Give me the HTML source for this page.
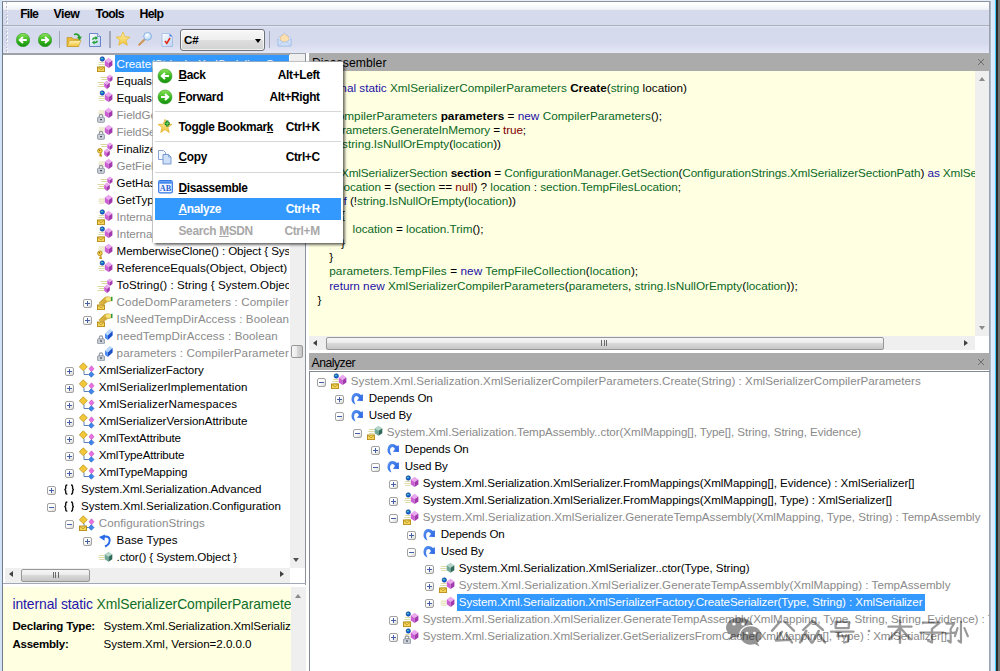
<!DOCTYPE html><html><head><meta charset="utf-8"><title>.NET Reflector</title><style>

html,body{margin:0;padding:0}
html{overflow:hidden;width:1000px;height:671px;background:#fff}
body{width:1000px;height:671px;overflow:hidden;position:relative;background:#fff;font-family:"Liberation Sans",sans-serif;color:#000}
.a,.t,.ic,.bx{position:absolute}
.t{white-space:pre;color:#000}
.bx{width:7px;height:7px;border:1px solid #a2a2a2;border-radius:2px;background:linear-gradient(135deg,#fff 0%,#fff 45%,#d8d6d0 100%)}
.bx .h{position:absolute;left:1px;top:3px;width:5px;height:1px;background:#4560a6}
.bx .v{position:absolute;left:3px;top:1px;width:1px;height:5px;background:#4560a6}
.hdr{background:#ababab}
.yel{background:#ffffe1}
.trk{background:#efefef}
.thumb{border:1px solid #979797;border-radius:2px;background:linear-gradient(#f6f6f6 0%,#ebebeb 45%,#d9d9d9 50%,#c6c6c6 100%);box-sizing:border-box}
.thumbv{border:1px solid #979797;border-radius:2px;background:linear-gradient(90deg,#f6f6f6 0%,#ebebeb 45%,#d9d9d9 50%,#c6c6c6 100%);box-sizing:border-box}
.sep{background:#a3a7ba;width:1.5px}
.msep{height:1px;background:#d7d7d7;left:2px;width:186px}

</style></head><body>
<svg width="0" height="0" style="position:absolute">
<defs>
<linearGradient id="gGreen" x1="0" y1="0" x2="0" y2="1"><stop offset="0" stop-color="#8fe45a"/><stop offset=".5" stop-color="#3cba22"/><stop offset="1" stop-color="#14900c"/></linearGradient>
<linearGradient id="gGold" x1="0" y1="0" x2="0" y2="1"><stop offset="0" stop-color="#fff4b0"/><stop offset="1" stop-color="#f0c23a"/></linearGradient>
<linearGradient id="gBlueP" x1="0" y1="0" x2="1" y2="1"><stop offset="0" stop-color="#ffffff"/><stop offset="1" stop-color="#bcd4f4"/></linearGradient>
<radialGradient id="gLens" cx=".4" cy=".35" r=".7"><stop offset="0" stop-color="#ffffff"/><stop offset="1" stop-color="#a9d3f6"/></radialGradient>

<!-- building blocks -->
<g id="cubeP"><polygon points="11.6,1.800 15.400,4.400 11.600,7 7.800,4.400" fill="#eaa8ee"/><polygon points="7.800,4.400 11.600,7 11.600,12 7.800,9.400" fill="#cc5ed4"/><polygon points="11.600,7 15.400,4.400 15.400,9.400 11.600,12" fill="#a23aae"/></g>
<g id="cubeT"><polygon points="11.5,2.8 15.3,5.2 11.5,7.7 7.7,5.2" fill="#b4d6c8"/><polygon points="7.7,5.2 11.5,7.7 11.5,12.8 7.7,10.2" fill="#6fa896"/><polygon points="11.5,7.7 15.3,5.2 15.3,10.2 11.5,12.8" fill="#2f6a5a"/></g>
<g id="lines"><path d="M2 6.5H7M3 8.5H7M2 10.5H7" stroke="#d6d290" stroke-width="1" fill="none"/></g>
<g id="linesS"><path d="M1.800 6.500H7.500M1.300 8.500H7.500M2.200 10.500H7.500" stroke="#dfdba6" stroke-width="1" fill="none"/></g>
<g id="globe"><circle cx="5.300" cy="3" r="2.200" fill="#1668e0" stroke="#0c2f7a" stroke-width=".6"/><path d="M4.100 2q1.300-.8 1.900.2q-.3 1.200-1.300 1.100q-.9-.3-.6-1.300z" fill="#52d8a0"/></g>
<g id="env"><rect x=".5" y="11" width="7" height="4.6" fill="#f3d55c" stroke="#b58a14" stroke-width=".9"/><path d="M.8 11.3L4 13.8L7.2 11.300" stroke="#b58a14" stroke-width=".7" fill="none"/></g>
<g id="lock"><path d="M2.3 11V9.600a1.700 1.700 0 0 1 3.400 0V11" stroke="#8e96a4" stroke-width="1.100" fill="none"/><rect x=".6" y="10.800" width="6.800" height="5" rx=".8" fill="#cdd2da" stroke="#7e8796" stroke-width=".8"/><path d="M2.800 12.600h2.400l-1.200 1.700z" fill="#2c3340"/></g>
<g id="key"><circle cx="2.900" cy="10.300" r="2.300" fill="#f6d64e" stroke="#a98212" stroke-width=".8"/><circle cx="2.500" cy="9.800" r=".7" fill="#7a5c08"/><path d="M3.600 12.300L4.300 15.500L2.900 15.200L3 13.800" stroke="#c99b1a" stroke-width="1.300" fill="none"/></g>

<!-- methods -->
<symbol id="m-plain" viewBox="0 0 16 16"><use href="#linesS" transform="translate(0,.6)"/><use href="#cubeP" transform="translate(0,.9)"/></symbol>
<symbol id="m-static" viewBox="0 0 16 16"><use href="#linesS"/><use href="#cubeP"/><use href="#globe"/></symbol>
<symbol id="m-static-int" viewBox="0 0 16 16"><use href="#linesS"/><use href="#cubeP"/><use href="#globe"/><use href="#env"/></symbol>
<symbol id="m-static-private" viewBox="0 0 16 16"><use href="#linesS"/><use href="#cubeP"/><use href="#globe"/><use href="#lock"/></symbol>
<symbol id="m-private" viewBox="0 0 16 16"><use href="#linesS" transform="translate(0,-2.500)"/><use href="#cubeP" transform="translate(0,-1)"/><use href="#lock" transform="translate(0,-.5)"/></symbol>
<symbol id="m-prot" viewBox="0 0 16 16"><use href="#linesS" transform="translate(0,-2.500)"/><use href="#cubeP" transform="translate(0,-1)"/><use href="#key"/></symbol>
<symbol id="m-virtual" viewBox="0 0 16 16"><path d="M3.500 4.500H10M4.500 6.500H10M.5 9.500H7M2 11.500H7M.5 13.500H7" stroke="#dcd89c" stroke-width="1" fill="none"/><g transform="translate(5,.1) scale(.68,.74)"><use href="#cubeP"/></g><g transform="translate(1.400,6.100) scale(.74,.82)"><use href="#cubeP"/></g></symbol>
<symbol id="m-virtual-prot" viewBox="0 0 16 16"><path d="M3.500 3.500H10M4.500 5.500H10" stroke="#dcd89c" stroke-width="1" fill="none"/><g transform="translate(5,.1) scale(.68,.74)"><use href="#cubeP"/></g><g transform="translate(1.400,6.100) scale(.74,.82)"><use href="#cubeP"/></g><use href="#key" transform="translate(0,-.5)"/></symbol>
<symbol id="ctor" viewBox="0 0 16 16"><use href="#linesS"/><use href="#cubeT"/></symbol>
<symbol id="ctor-int" viewBox="0 0 16 16"><use href="#linesS" transform="translate(0,-1)"/><use href="#cubeT" transform="translate(0,-1)"/><use href="#env"/></symbol>

<!-- field -->
<symbol id="f-private" viewBox="0 0 16 16"><polygon points="8,5.500 12.800,1 15.600,3 10.800,7.500" fill="#b6d7ff"/><polygon points="8,5.500 10.800,7.500 10.800,12 8,10" fill="#4b8af0"/><polygon points="10.800,7.500 15.600,3 15.600,7.500 10.800,12" fill="#1a50c8"/><use href="#lock"/></symbol>

<!-- property -->
<symbol id="p-int" viewBox="0 0 16 16"><path d="M2 8.800L8 3.200L11 2.700L13.800 3.400V7L10.500 7.700L6.500 10.400L3.200 10.400z" fill="#e3bd48" stroke="#b08c20" stroke-width=".5"/><path d="M3.500 8.500l3.800-3.800M5 9.300l3.800-3.800M6.500 9.600l3-3" stroke="#a88414" stroke-width=".55"/><ellipse cx="11.400" cy="5.100" rx="2.700" ry="2" fill="#f9e37c"/><rect x="14" y="2.800" width="1.500" height="4.300" fill="#2f9a3c"/><use href="#env"/></symbol>

<!-- class -->
<g id="clsbase"><path d="M5 8.500V12.500H9.500" stroke="#5b82b4" stroke-width="1" fill="none"/><polygon points="0.300,4.800 4.300,.8 8.300,4.800 4.300,8.800" fill="#f2c83a" stroke="#b48a10" stroke-width=".7"/><polygon points="10,6.800 12.500,3.800 15,6.800 12.500,9.800" fill="#ea70e2" stroke="#b040b0" stroke-width=".5"/><polygon points="9.500,12.500 12.300,9.700 15.100,12.500 12.300,15.300" fill="#3c86ea" stroke="#1c50b0" stroke-width=".5"/></g>
<symbol id="class" viewBox="0 0 16 16"><use href="#clsbase"/></symbol>
<symbol id="class-int" viewBox="0 0 16 16"><use href="#clsbase"/><use href="#env"/></symbol>

<!-- namespace -->
<symbol id="ns" viewBox="0 0 16 16"><path d="M6.300 4Q4.700 4 4.700 5.400V7.200Q4.700 8.400 3.400 8.600Q4.700 8.800 4.700 10V11.800Q4.700 13.200 6.300 13.200M10 4Q11.600 4 11.600 5.400V7.200Q11.600 8.400 12.900 8.600Q11.600 8.800 11.600 10V11.800Q11.600 13.200 10 13.200" stroke="#111" stroke-width="1.400" fill="none"/></symbol>

<!-- base types -->
<symbol id="basetypes" viewBox="0 0 16 16"><path d="M8 14.500Q13.500 12 12.500 7Q11.500 3.500 6.500 4.800" stroke="#2a6ae8" stroke-width="2" fill="none"/><polygon points="2,5 8,2.500 7.500,8.800" fill="#2a6ae8"/></symbol>

<!-- depends on / used by -->
<symbol id="dep" viewBox="0 0 16 16"><linearGradient id="gDep" x1="0" y1="0" x2="1" y2="1"><stop offset="0" stop-color="#5b95f2"/><stop offset="1" stop-color="#1f5be0"/></linearGradient><path d="M5.500 14.600Q1 12.400 1.500 8.200Q2.200 3 6.400 3Q9.300 3 10.900 5.100L12.900 4.300L12.900 10.900L6.900 10.700L9 8.100Q7.800 5.700 6.100 5.900Q3.900 6.500 4 9.400Q4.200 12.600 5.500 14.600Z" fill="url(#gDep)"/></symbol>

<!-- toolbar -->
<symbol id="tb-back" viewBox="0 0 14 14"><circle cx="7" cy="7" r="6.700" fill="url(#gGreen)" stroke="#1f8a14" stroke-width=".5"/><path d="M10.800 7H4.500M7 4L3.800 7L7 10" stroke="#fff" stroke-width="2" fill="none" stroke-linejoin="miter"/></symbol>
<symbol id="tb-fwd" viewBox="0 0 14 14"><circle cx="7" cy="7" r="6.700" fill="url(#gGreen)" stroke="#1f8a14" stroke-width=".5"/><path d="M3.200 7H9.500M7 4L10.200 7L7 10" stroke="#fff" stroke-width="2" fill="none" stroke-linejoin="miter"/></symbol>
<symbol id="mn-back" viewBox="0 0 16 16"><circle cx="8" cy="8" r="7" fill="url(#gGreen)" stroke="#1f8a14" stroke-width=".5"/><path d="M12 8H5.500M8 5L4.800 8L8 11" stroke="#fff" stroke-width="2" fill="none"/></symbol>
<symbol id="mn-fwd" viewBox="0 0 16 16"><circle cx="8" cy="8" r="7" fill="url(#gGreen)" stroke="#1f8a14" stroke-width=".5"/><path d="M4 8H10.500M8 5L11.200 8L8 11" stroke="#fff" stroke-width="2" fill="none"/></symbol>
<symbol id="tb-open" viewBox="0 0 16 16"><path d="M1 5.500H6L7 7H12.500V14.500H1z" fill="#e9b93a" stroke="#b8891a" stroke-width=".6"/><path d="M1 14.500L3.500 8.500H15L12.500 14.500z" fill="url(#gGold)" stroke="#c29a2a" stroke-width=".6"/><path d="M8 2.500Q12.500 1 13.500 5.500" stroke="#2aa02a" stroke-width="1.800" fill="none"/><polygon points="11,5 15.800,4.500 13.800,8.500" fill="#2aa02a"/></symbol>
<symbol id="tb-refresh" viewBox="0 0 16 16"><path d="M2.500 1.500H10.500L13.500 4.500V14.500H2.500z" fill="url(#gBlueP)" stroke="#5c7cc0" stroke-width=".9"/><path d="M10.500 1.500V4.500H13.500" fill="#dbe8fa" stroke="#5c7cc0" stroke-width=".7"/><path d="M5 7.500Q5.500 5 8.500 5.300L8.500 4L11 6L8.500 8V6.800Q6.500 6.500 6.300 8zM11 9Q10.500 11.700 7.500 11.300V12.600L5 10.600L7.500 8.600V9.800Q9.500 10 9.700 8.500z" fill="#1fa02c"/></symbol>
<symbol id="tb-star" viewBox="0 0 16 16"><polygon points="8,1 9.900,5.700 14.900,6.100 11.100,9.300 12.300,14.200 8,11.600 3.700,14.200 4.900,9.300 1.100,6.100 6.100,5.700" fill="url(#gGold)" stroke="#e8b424" stroke-width=".7"/></symbol>
<symbol id="tb-find" viewBox="0 0 16 16"><path d="M7.600 7.500L2.200 12.800" stroke="#cf9454" stroke-width="2" stroke-linecap="round"/><circle cx="10.600" cy="4.300" r="3.900" fill="url(#gLens)" stroke="#8ab2e0" stroke-width="1"/></symbol>
<symbol id="tb-check" viewBox="0 0 16 16"><path d="M3 1.500H10.500L13.500 4.500V14.500H3z" fill="url(#gBlueP)" stroke="#9db8e4" stroke-width=".8"/><path d="M10.500 1.500V4.500H13.500z" fill="#4a80e0"/><path d="M6 9L7.800 11.300L11 6" stroke="#e02818" stroke-width="1.600" fill="none"/></symbol>
<symbol id="tb-mail" viewBox="0 0 15 16"><path d="M1 6.500L7.500 1L14 6.500V14H1z" fill="#e6f0fc" stroke="#a4bfe8" stroke-width=".8"/><path d="M3.500 5L7.500 2L11.500 5V9.500H3.500z" fill="#fce0b0" stroke="#eeb066" stroke-width=".5"/><path d="M1 6.800L7.500 11L14 6.800V14H1z" fill="#cfe0f8" stroke="#a4bfe8" stroke-width=".7"/><path d="M1 14L5.800 9.800M14 14L9.200 9.800" stroke="#a4bfe8" stroke-width=".6"/></symbol>

<!-- menu -->
<symbol id="mn-star" viewBox="0 0 16 16"><polygon points="8.00,0.30 9.76,5.17 14.94,5.34 10.85,8.53 12.29,13.51 8.00,10.60 3.71,13.51 5.15,8.53 1.06,5.34 6.24,5.17" fill="url(#gGold)" stroke="#e2ac1c" stroke-width=".7"/><path d="M10.200 1.600V7.600M7.700 4.600H12.700" stroke="#157a15" stroke-width="2.600"/><path d="M10.200 2.400V6.800M8.500 4.600H11.900" stroke="#6fd868" stroke-width="1"/></symbol>
<symbol id="mn-copy" viewBox="0 0 16 16"><path d="M1.500 1.500H6.500L8.500 3.500V10.500H1.500z" fill="#f4f8ff" stroke="#7b98cc" stroke-width=".9"/><path d="M6 5.500H11.500L14 8V15H6z" fill="#cfe0fa" stroke="#6f90cc" stroke-width=".9"/><path d="M11.500 5.500V8H14" fill="none" stroke="#6f90cc" stroke-width=".7"/></symbol>
<symbol id="mn-dis" viewBox="0 0 16 16"><rect x="1.700" y=".700" width="13.600" height="12.200" rx="1.500" fill="#f4f8ff" stroke="#2d74e6" stroke-width="1.200"/><rect x="2.300" y="1.300" width="12.400" height="2.400" fill="#3f86f0"/><text x="8.500" y="10.900" font-family="Liberation Serif" font-weight="bold" font-size="8.200" text-anchor="middle" fill="#2a62d4">AB</text></symbol>
</defs>
</svg>

<div class="a" style="left:0;top:0;width:1000px;height:2px;background:#e3ebf6"></div>
<div class="a" style="left:0;top:0;width:2px;height:671px;background:#d2e3f8"></div>
<div class="a" style="left:2px;top:1px;width:1px;height:670px;background:#717c8b"></div>
<div class="a" style="left:2px;top:1px;width:988px;height:1px;background:#8a919c"></div>
<div class="a" style="left:989px;top:1px;width:2px;height:670px;background:linear-gradient(90deg,#8f97a3,#b9c2d0)"></div>
<div class="a" style="left:991px;top:0;width:4.500px;height:671px;background:linear-gradient(90deg,#e4eefb,#cfe3fa)"></div>
<div class="a" style="left:995.3px;top:0;width:1px;height:671px;background:#3cccff"></div>
<div class="a" style="left:996.3px;top:0;width:1.5px;height:671px;background:#2c2c2c"></div>
<div class="a" style="left:997.8px;top:0;width:2.2px;height:671px;background:#727272"></div>
<div class="a" style="left:3px;top:2px;width:986px;height:23px;background:linear-gradient(#ffffff 0%,#f5f6fb 26%,#eceef6 34%,#d6daed 36%,#d6daed 100%)"></div>
<div class="a" style="left:3px;top:25px;width:986px;height:1px;background:#adb1bd"></div>
<div class="a" style="left:3px;top:26px;width:986px;height:27px;background:linear-gradient(#e2e5f3 0px,#d6daed 2px,#d6daed 17px,#e4e7f5 27px)"></div>
<div class="a" style="left:3px;top:53px;width:302.5px;height:1.8px;background:#9da1a9"></div>
<div class="a" style="left:6.6px;top:3.2px;width:1.5px;height:1.5px;background:#fff;box-shadow:-1px -1px 0 #b9bdd0"></div>
<div class="a" style="left:6.6px;top:7px;width:1.5px;height:1.5px;background:#fff;box-shadow:-1px -1px 0 #b9bdd0"></div>
<div class="a" style="left:6.6px;top:10.8px;width:1.5px;height:1.5px;background:#fff;box-shadow:-1px -1px 0 #b9bdd0"></div>
<div class="a" style="left:6.6px;top:14.6px;width:1.5px;height:1.5px;background:#fff;box-shadow:-1px -1px 0 #b9bdd0"></div>
<div class="a" style="left:6.6px;top:18.4px;width:1.5px;height:1.5px;background:#fff;box-shadow:-1px -1px 0 #b9bdd0"></div>
<div class="a" style="left:6.6px;top:22.2px;width:1.5px;height:1.5px;background:#fff;box-shadow:-1px -1px 0 #b9bdd0"></div>
<div class="a" style="left:6.6px;top:28.6px;width:1.5px;height:1.5px;background:#fff;box-shadow:-1px -1px 0 #b9bdd0"></div>
<div class="a" style="left:6.6px;top:32.4px;width:1.5px;height:1.5px;background:#fff;box-shadow:-1px -1px 0 #b9bdd0"></div>
<div class="a" style="left:6.6px;top:36.2px;width:1.5px;height:1.5px;background:#fff;box-shadow:-1px -1px 0 #b9bdd0"></div>
<div class="a" style="left:6.6px;top:40px;width:1.5px;height:1.5px;background:#fff;box-shadow:-1px -1px 0 #b9bdd0"></div>
<div class="a" style="left:6.6px;top:43.8px;width:1.5px;height:1.5px;background:#fff;box-shadow:-1px -1px 0 #b9bdd0"></div>
<div class="a" style="left:6.6px;top:47.6px;width:1.5px;height:1.5px;background:#fff;box-shadow:-1px -1px 0 #b9bdd0"></div>
<div class="a" style="left:6.6px;top:51.2px;width:1.5px;height:1.5px;background:#fff;box-shadow:-1px -1px 0 #b9bdd0"></div>
<div class="t " style="left:20.2px;top:5.50px;font-size:12.3px;line-height:16px;height:16px;letter-spacing:-0.847px;"><span style="color:#000;font-weight:bold;">File</span></div>
<div class="t " style="left:53.4px;top:5.50px;font-size:12.3px;line-height:16px;height:16px;letter-spacing:-0.453px;"><span style="color:#000;font-weight:bold;">View</span></div>
<div class="t " style="left:95.5px;top:5.50px;font-size:12.3px;line-height:16px;height:16px;letter-spacing:-0.698px;"><span style="color:#000;font-weight:bold;">Tools</span></div>
<div class="t " style="left:139.6px;top:5.50px;font-size:12.3px;line-height:16px;height:16px;letter-spacing:-0.764px;"><span style="color:#000;font-weight:bold;">Help</span></div>
<svg class="ic" style="left:16px;top:33px" width="14" height="14" viewBox="0 0 14 14" ><use href="#tb-back"/></svg>
<svg class="ic" style="left:37.5px;top:33px" width="14" height="14" viewBox="0 0 14 14" ><use href="#tb-fwd"/></svg>
<div class="a sep" style="left:58.5px;top:31px;height:17px"></div>
<svg class="ic" style="left:66px;top:32px" width="16" height="16" viewBox="0 0 16 16" ><use href="#tb-open"/></svg>
<svg class="ic" style="left:87px;top:32px" width="16" height="16" viewBox="0 0 16 16" ><use href="#tb-refresh"/></svg>
<div class="a sep" style="left:109px;top:31px;height:17px"></div>
<svg class="ic" style="left:115.2px;top:30.6px" width="16" height="16" viewBox="0 0 16 16" ><use href="#tb-star"/></svg>
<svg class="ic" style="left:137px;top:32px" width="16" height="16" viewBox="0 0 16 16" ><use href="#tb-find"/></svg>
<svg class="ic" style="left:159px;top:32px" width="16" height="16" viewBox="0 0 16 16" ><use href="#tb-check"/></svg>
<div class="a" style="left:180px;top:29px;width:85px;height:22px;box-sizing:border-box;border:1px solid #6f7378;border-radius:3px;background:linear-gradient(#f7f7f7 0%,#efefef 48%,#dedede 52%,#d2d2d2 100%);box-shadow:inset 0 0 0 1px rgba(255,255,255,.7)"></div>
<div class="t " style="left:184px;top:32.20px;font-size:11.6px;line-height:16px;height:16px;letter-spacing:0.000px;"><span style="color:#000;font-weight:bold;">C#</span></div>
<div class="a" style="left:254.5px;top:38.5px;width:0;height:0;border-left:3.5px solid transparent;border-right:3.5px solid transparent;border-top:4px solid #000"></div>
<div class="a sep" style="left:268.7px;top:31px;height:17px"></div>
<svg class="ic" style="left:276.5px;top:32px" width="15" height="16" viewBox="0 0 15 16" ><use href="#tb-mail"/></svg>
<div class="a" style="left:304.8px;top:54px;width:1px;height:530.5px;background:#8b929d"></div>
<div class="a" style="left:3px;top:583.2px;width:302.8px;height:1.3px;background:#a3a9b4"></div>
<div class="a trk" style="left:290px;top:54px;width:15px;height:514px"></div>
<div class="a thumbv" style="left:290.5px;top:345px;width:12.5px;height:12.5px"></div>
<div class="a" style="left:293px;top:558px;width:0;height:0;border-left:3.5px solid transparent;border-right:3.5px solid transparent;border-top:4px solid #505050"></div>
<div class="a trk" style="left:4.5px;top:568px;width:285.5px;height:15px"></div>
<div class="a thumb" style="left:20.5px;top:568.5px;width:69px;height:13.5px"></div>
<div class="a" style="left:52.5px;top:572px;width:1px;height:6px;background:#6a6a6a"></div>
<div class="a" style="left:55px;top:572px;width:1px;height:6px;background:#6a6a6a"></div>
<div class="a" style="left:57.5px;top:572px;width:1px;height:6px;background:#6a6a6a"></div>
<div class="a" style="left:9px;top:571px;width:0;height:0;border-top:3.5px solid transparent;border-bottom:3.5px solid transparent;border-right:4px solid #404040"></div>
<div class="a" style="left:279.5px;top:571px;width:0;height:0;border-top:3.5px solid transparent;border-bottom:3.5px solid transparent;border-left:4px solid #404040"></div>
<div class="a" style="left:290px;top:568px;width:15px;height:15px;background:#fff"></div>
<div class="a" style="left:3px;top:54px;width:286px;height:514px;overflow:hidden">
<svg class="ic" style="left:94.0px;top:2.0px" width="16" height="16" viewBox="0 0 16 16" ><use href="#m-static-int"/></svg>
<div class="a" style="left:112.0px;top:0.9px;width:200px;height:17.6px;background:#3399ff"></div>
<div class="t " style="left:113.6px;top:1.80px;font-size:11.6px;line-height:16px;height:16px;letter-spacing:-0.060px;"><span style="color:#fff;">Create(String) : XmlSerializerCompilerParameters</span></div>
<svg class="ic" style="left:94.0px;top:19.0px" width="16" height="16" viewBox="0 0 16 16" ><use href="#m-virtual"/></svg>
<div class="t " style="left:113.6px;top:18.80px;font-size:11.6px;line-height:16px;height:16px;letter-spacing:-0.060px;"><span style="color:#000;">Equals(Object) : Boolean</span></div>
<svg class="ic" style="left:94.0px;top:36.0px" width="16" height="16" viewBox="0 0 16 16" ><use href="#m-static"/></svg>
<div class="t " style="left:113.6px;top:35.80px;font-size:11.6px;line-height:16px;height:16px;letter-spacing:-0.060px;"><span style="color:#000;">Equals(Object, Object) : Boolean</span></div>
<svg class="ic" style="left:94.0px;top:53.0px" width="16" height="16" viewBox="0 0 16 16" ><use href="#m-private"/></svg>
<div class="t " style="left:113.6px;top:52.80px;font-size:11.6px;line-height:16px;height:16px;letter-spacing:-0.060px;"><span style="color:#8a8a8a;">FieldGetter(String, String, Object&amp;) : Void</span></div>
<svg class="ic" style="left:94.0px;top:70.0px" width="16" height="16" viewBox="0 0 16 16" ><use href="#m-private"/></svg>
<div class="t " style="left:113.6px;top:69.80px;font-size:11.6px;line-height:16px;height:16px;letter-spacing:-0.060px;"><span style="color:#8a8a8a;">FieldSetter(String, String, Object) : Void</span></div>
<svg class="ic" style="left:94.0px;top:87.0px" width="16" height="16" viewBox="0 0 16 16" ><use href="#m-virtual-prot"/></svg>
<div class="t " style="left:113.6px;top:86.80px;font-size:11.6px;line-height:16px;height:16px;letter-spacing:-0.060px;"><span style="color:#000;">Finalize() : Void</span></div>
<svg class="ic" style="left:94.0px;top:104.0px" width="16" height="16" viewBox="0 0 16 16" ><use href="#m-private"/></svg>
<div class="t " style="left:113.6px;top:103.80px;font-size:11.6px;line-height:16px;height:16px;letter-spacing:-0.060px;"><span style="color:#8a8a8a;">GetFieldInfo(String, String) : FieldInfo</span></div>
<svg class="ic" style="left:94.0px;top:121.0px" width="16" height="16" viewBox="0 0 16 16" ><use href="#m-virtual"/></svg>
<div class="t " style="left:113.6px;top:120.80px;font-size:11.6px;line-height:16px;height:16px;letter-spacing:-0.060px;"><span style="color:#000;">GetHashCode() : Int32</span></div>
<svg class="ic" style="left:94.0px;top:138.0px" width="16" height="16" viewBox="0 0 16 16" ><use href="#m-plain"/></svg>
<div class="t " style="left:113.6px;top:137.80px;font-size:11.6px;line-height:16px;height:16px;letter-spacing:-0.060px;"><span style="color:#000;">GetType() : Type</span></div>
<svg class="ic" style="left:94.0px;top:155.0px" width="16" height="16" viewBox="0 0 16 16" ><use href="#m-static-int"/></svg>
<div class="t " style="left:113.6px;top:154.80px;font-size:11.6px;line-height:16px;height:16px;letter-spacing:-0.060px;"><span style="color:#8a8a8a;">InternalCreate(CompilerParameters) : Xml</span></div>
<svg class="ic" style="left:94.0px;top:172.0px" width="16" height="16" viewBox="0 0 16 16" ><use href="#m-static-int"/></svg>
<div class="t " style="left:113.6px;top:171.80px;font-size:11.6px;line-height:16px;height:16px;letter-spacing:-0.060px;"><span style="color:#8a8a8a;">InternalEquals(Object, Object) : Boolean</span></div>
<svg class="ic" style="left:94.0px;top:189.0px" width="16" height="16" viewBox="0 0 16 16" ><use href="#m-prot"/></svg>
<div class="t " style="left:113.6px;top:188.80px;font-size:11.6px;line-height:16px;height:16px;letter-spacing:-0.092px;"><span style="color:#000;">MemberwiseClone() : Object { System.Object }</span></div>
<svg class="ic" style="left:94.0px;top:206.0px" width="16" height="16" viewBox="0 0 16 16" ><use href="#m-static"/></svg>
<div class="t " style="left:113.6px;top:205.80px;font-size:11.6px;line-height:16px;height:16px;letter-spacing:0.015px;"><span style="color:#000;">ReferenceEquals(Object, Object) : Boolean</span></div>
<svg class="ic" style="left:94.0px;top:223.0px" width="16" height="16" viewBox="0 0 16 16" ><use href="#m-virtual"/></svg>
<div class="t " style="left:113.6px;top:222.80px;font-size:11.6px;line-height:16px;height:16px;letter-spacing:0.039px;"><span style="color:#000;">ToString() : String { System.Object }</span></div>
<div class="bx" style="left:79.8px;top:245.0px"><i class="h"></i><i class="v"></i></div>
<svg class="ic" style="left:94.0px;top:240.0px" width="16" height="16" viewBox="0 0 16 16" ><use href="#p-int"/></svg>
<div class="t " style="left:113.6px;top:239.80px;font-size:11.6px;line-height:16px;height:16px;letter-spacing:0.140px;"><span style="color:#8a8a8a;">CodeDomParameters : CompilerParameters</span></div>
<div class="bx" style="left:79.8px;top:262.0px"><i class="h"></i><i class="v"></i></div>
<svg class="ic" style="left:94.0px;top:257.0px" width="16" height="16" viewBox="0 0 16 16" ><use href="#p-int"/></svg>
<div class="t " style="left:113.6px;top:256.80px;font-size:11.6px;line-height:16px;height:16px;letter-spacing:0.107px;"><span style="color:#8a8a8a;">IsNeedTempDirAccess : Boolean</span></div>
<svg class="ic" style="left:94.0px;top:274.0px" width="16" height="16" viewBox="0 0 16 16" ><use href="#f-private"/></svg>
<div class="t " style="left:113.6px;top:273.80px;font-size:11.6px;line-height:16px;height:16px;letter-spacing:0.103px;"><span style="color:#8a8a8a;">needTempDirAccess : Boolean</span></div>
<svg class="ic" style="left:94.0px;top:291.0px" width="16" height="16" viewBox="0 0 16 16" ><use href="#f-private"/></svg>
<div class="t " style="left:113.6px;top:290.80px;font-size:11.6px;line-height:16px;height:16px;letter-spacing:0.116px;"><span style="color:#8a8a8a;">parameters : CompilerParameters</span></div>
<div class="bx" style="left:62.0px;top:313.0px"><i class="h"></i><i class="v"></i></div>
<svg class="ic" style="left:76.2px;top:308.0px" width="16" height="16" viewBox="0 0 16 16" ><use href="#class"/></svg>
<div class="t " style="left:95.8px;top:307.80px;font-size:11.6px;line-height:16px;height:16px;letter-spacing:-0.108px;"><span style="color:#000;">XmlSerializerFactory</span></div>
<div class="bx" style="left:62.0px;top:330.0px"><i class="h"></i><i class="v"></i></div>
<svg class="ic" style="left:76.2px;top:325.0px" width="16" height="16" viewBox="0 0 16 16" ><use href="#class"/></svg>
<div class="t " style="left:95.8px;top:324.80px;font-size:11.6px;line-height:16px;height:16px;letter-spacing:0.038px;"><span style="color:#000;">XmlSerializerImplementation</span></div>
<div class="bx" style="left:62.0px;top:347.0px"><i class="h"></i><i class="v"></i></div>
<svg class="ic" style="left:76.2px;top:342.0px" width="16" height="16" viewBox="0 0 16 16" ><use href="#class"/></svg>
<div class="t " style="left:95.8px;top:341.80px;font-size:11.6px;line-height:16px;height:16px;letter-spacing:0.102px;"><span style="color:#000;">XmlSerializerNamespaces</span></div>
<div class="bx" style="left:62.0px;top:364.0px"><i class="h"></i><i class="v"></i></div>
<svg class="ic" style="left:76.2px;top:359.0px" width="16" height="16" viewBox="0 0 16 16" ><use href="#class"/></svg>
<div class="t " style="left:95.8px;top:358.80px;font-size:11.6px;line-height:16px;height:16px;letter-spacing:-0.053px;"><span style="color:#000;">XmlSerializerVersionAttribute</span></div>
<div class="bx" style="left:62.0px;top:381.0px"><i class="h"></i><i class="v"></i></div>
<svg class="ic" style="left:76.2px;top:376.0px" width="16" height="16" viewBox="0 0 16 16" ><use href="#class"/></svg>
<div class="t " style="left:95.8px;top:375.80px;font-size:11.6px;line-height:16px;height:16px;letter-spacing:-0.150px;"><span style="color:#000;">XmlTextAttribute</span></div>
<div class="bx" style="left:62.0px;top:398.0px"><i class="h"></i><i class="v"></i></div>
<svg class="ic" style="left:76.2px;top:393.0px" width="16" height="16" viewBox="0 0 16 16" ><use href="#class"/></svg>
<div class="t " style="left:95.8px;top:392.80px;font-size:11.6px;line-height:16px;height:16px;letter-spacing:-0.180px;"><span style="color:#000;">XmlTypeAttribute</span></div>
<div class="bx" style="left:62.0px;top:415.0px"><i class="h"></i><i class="v"></i></div>
<svg class="ic" style="left:76.2px;top:410.0px" width="16" height="16" viewBox="0 0 16 16" ><use href="#class"/></svg>
<div class="t " style="left:95.8px;top:409.80px;font-size:11.6px;line-height:16px;height:16px;letter-spacing:-0.070px;"><span style="color:#000;">XmlTypeMapping</span></div>
<div class="bx" style="left:44.2px;top:432.0px"><i class="h"></i><i class="v"></i></div>
<svg class="ic" style="left:58.400000000000006px;top:427.0px" width="16" height="16" viewBox="0 0 16 16" ><use href="#ns"/></svg>
<div class="t " style="left:78.0px;top:426.80px;font-size:11.6px;line-height:16px;height:16px;letter-spacing:-0.076px;"><span style="color:#000;">System.Xml.Serialization.Advanced</span></div>
<div class="bx" style="left:44.2px;top:449.0px"><i class="h"></i></div>
<svg class="ic" style="left:58.400000000000006px;top:444.0px" width="16" height="16" viewBox="0 0 16 16" ><use href="#ns"/></svg>
<div class="t " style="left:78.0px;top:443.80px;font-size:11.6px;line-height:16px;height:16px;letter-spacing:-0.013px;"><span style="color:#000;">System.Xml.Serialization.Configuration</span></div>
<div class="bx" style="left:62.0px;top:466.0px"><i class="h"></i></div>
<svg class="ic" style="left:76.2px;top:461.0px" width="16" height="16" viewBox="0 0 16 16" ><use href="#class-int"/></svg>
<div class="t " style="left:95.8px;top:460.80px;font-size:11.6px;line-height:16px;height:16px;letter-spacing:0.053px;"><span style="color:#8a8a8a;">ConfigurationStrings</span></div>
<div class="bx" style="left:79.8px;top:483.0px"><i class="h"></i><i class="v"></i></div>
<svg class="ic" style="left:94.0px;top:478.0px" width="16" height="16" viewBox="0 0 16 16" ><use href="#basetypes"/></svg>
<div class="t " style="left:113.6px;top:477.80px;font-size:11.6px;line-height:16px;height:16px;letter-spacing:0.072px;"><span style="color:#000;">Base Types</span></div>
<svg class="ic" style="left:94.0px;top:495.0px" width="16" height="16" viewBox="0 0 16 16" ><use href="#ctor"/></svg>
<div class="t " style="left:113.6px;top:494.80px;font-size:11.6px;line-height:16px;height:16px;letter-spacing:-0.102px;"><span style="color:#000;">.ctor() { System.Object }</span></div>
</div>
<div class="a yel" style="left:3px;top:586.5px;width:288px;height:84.5px"></div>
<div class="a trk" style="left:291px;top:586.5px;width:14.5px;height:84.5px"></div>
<div class="a" style="left:295px;top:593.5px;width:0;height:0;border-left:3.5px solid transparent;border-right:3.5px solid transparent;border-bottom:4px solid #8a8a8a"></div>
<div class="a" style="left:3px;top:586.5px;width:288px;height:84.5px;overflow:hidden">
<div class="t " style="left:9.5px;top:8.50px;font-size:13.9px;line-height:18px;height:18px;letter-spacing:-0.100px;"><span style="color:#2414ac;">internal static </span><span style="color:#0f6e2a;">XmlSerializerCompilerParameters</span></div>
<div class="t " style="left:9.5px;top:31.80px;font-size:11.5px;line-height:16px;height:16px;letter-spacing:-0.195px;"><span style="color:#000;font-weight:bold;">Declaring Type:</span></div>
<div class="t " style="left:100.5px;top:31.80px;font-size:11.6px;line-height:16px;height:16px;letter-spacing:-0.060px;"><span style="color:#000;">System.Xml.Serialization.XmlSerializerCompilerParameters</span></div>
<div class="t " style="left:9.5px;top:49.50px;font-size:11.5px;line-height:16px;height:16px;letter-spacing:-0.241px;"><span style="color:#000;font-weight:bold;">Assembly:</span></div>
<div class="t " style="left:100.5px;top:49.50px;font-size:11.6px;line-height:16px;height:16px;letter-spacing:-0.044px;"><span style="color:#000;">System.Xml, Version=2.0.0.0</span></div>
</div>
<div class="a hdr" style="left:309px;top:53px;width:680.5px;height:17.6px"></div>
<div class="t " style="left:312px;top:54.60px;font-size:12.2px;line-height:16px;height:16px;letter-spacing:0.056px;"><span style="color:#000;">Disassembler</span></div>
<svg class="ic" style="left:977px;top:58px" width="8" height="8" viewBox="0 0 8 8"><path d="M1 1L7 7M7 1L1 7" stroke="#5a5a5a" stroke-width="0.75" fill="none"/></svg>
<div class="a yel" style="left:309px;top:71px;width:666px;height:265px"></div>
<div class="a trk" style="left:975px;top:71px;width:14px;height:265px"></div>
<div class="a" style="left:978.5px;top:77px;width:0;height:0;border-left:3.5px solid transparent;border-right:3.5px solid transparent;border-bottom:4px solid #8a8a8a"></div>
<div class="a" style="left:978.5px;top:326px;width:0;height:0;border-left:3.5px solid transparent;border-right:3.5px solid transparent;border-top:4px solid #8a8a8a"></div>
<div class="a trk" style="left:309px;top:336px;width:666px;height:13.5px"></div>
<div class="a thumb" style="left:325.5px;top:336.5px;width:558px;height:13px"></div>
<div class="a" style="left:601px;top:340px;width:1px;height:6px;background:#6a6a6a"></div>
<div class="a" style="left:603.5px;top:340px;width:1px;height:6px;background:#6a6a6a"></div>
<div class="a" style="left:606px;top:340px;width:1px;height:6px;background:#6a6a6a"></div>
<div class="a" style="left:313px;top:339.5px;width:0;height:0;border-top:3.5px solid transparent;border-bottom:3.5px solid transparent;border-right:4px solid #404040"></div>
<div class="a" style="left:963.5px;top:339.5px;width:0;height:0;border-top:3.5px solid transparent;border-bottom:3.5px solid transparent;border-left:4px solid #404040"></div>
<div class="a" style="left:309px;top:71px;width:666px;height:265px;overflow:hidden">
<div class="t " style="left:8.5px;top:9.80px;font-size:11.75px;line-height:14px;height:14px;letter-spacing:-0.002px;"><span style="color:#2010a6;">internal static </span><span style="color:#0b6826;">XmlSerializerCompilerParameters</span><span style="color:#000;"> </span><span style="color:#000;font-weight:bold;">Create</span><span style="color:#000;">(</span><span style="color:#0b6826;">string</span><span style="color:#000;"> location)</span></div>
<div class="t " style="left:8.5px;top:23.93px;font-size:11.75px;line-height:14px;height:14px;letter-spacing:-0.120px;"><span style="color:#000;">{</span></div>
<div class="t " style="left:20.19999999999999px;top:38.06px;font-size:11.75px;line-height:14px;height:14px;letter-spacing:0.024px;"><span style="color:#0b6826;">CompilerParameters</span><span style="color:#000;"> </span><span style="color:#000;font-weight:bold;">parameters</span><span style="color:#000;"> = </span><span style="color:#2010a6;">new</span><span style="color:#000;"> </span><span style="color:#0b6826;">CompilerParameters</span><span style="color:#000;">();</span></div>
<div class="t " style="left:20.19999999999999px;top:52.19px;font-size:11.75px;line-height:14px;height:14px;letter-spacing:-0.116px;"><span style="color:#0b6826;">parameters.GenerateInMemory</span><span style="color:#000;"> = </span><span style="color:#800000;">true</span><span style="color:#000;">;</span></div>
<div class="t " style="left:20.19999999999999px;top:66.32px;font-size:11.75px;line-height:14px;height:14px;letter-spacing:-0.036px;"><span style="color:#2010a6;">if</span><span style="color:#000;"> (</span><span style="color:#0b6826;">string.IsNullOrEmpty</span><span style="color:#000;">(</span><span style="color:#0b6826;">location</span><span style="color:#000;">))</span></div>
<div class="t " style="left:20.19999999999999px;top:80.45px;font-size:11.75px;line-height:14px;height:14px;letter-spacing:-0.120px;"><span style="color:#000;">{</span></div>
<div class="t " style="left:31.899999999999977px;top:94.58px;font-size:11.75px;line-height:14px;height:14px;letter-spacing:-0.092px;"><span style="color:#0b6826;">XmlSerializerSection</span><span style="color:#000;"> </span><span style="color:#000;font-weight:bold;">section</span><span style="color:#000;"> = </span><span style="color:#0b6826;">ConfigurationManager.GetSection</span><span style="color:#000;">(</span><span style="color:#0b6826;">ConfigurationStrings.XmlSerializerSectionPath</span><span style="color:#000;">) </span><span style="color:#2010a6;">as</span><span style="color:#000;"> </span><span style="color:#0b6826;">XmlSerializerSection</span><span style="color:#000;">;</span></div>
<div class="t " style="left:31.899999999999977px;top:108.71px;font-size:11.75px;line-height:14px;height:14px;letter-spacing:-0.037px;"><span style="color:#0b6826;">location</span><span style="color:#000;"> = (</span><span style="color:#0b6826;">section</span><span style="color:#000;"> == </span><span style="color:#800000;">null</span><span style="color:#000;">) ? </span><span style="color:#0b6826;">location</span><span style="color:#000;"> : </span><span style="color:#0b6826;">section.TempFilesLocation</span><span style="color:#000;">;</span></div>
<div class="t " style="left:31.899999999999977px;top:122.84px;font-size:11.75px;line-height:14px;height:14px;letter-spacing:-0.034px;"><span style="color:#2010a6;">if</span><span style="color:#000;"> (!</span><span style="color:#0b6826;">string.IsNullOrEmpty</span><span style="color:#000;">(</span><span style="color:#0b6826;">location</span><span style="color:#000;">))</span></div>
<div class="t " style="left:31.899999999999977px;top:136.97px;font-size:11.75px;line-height:14px;height:14px;letter-spacing:-0.120px;"><span style="color:#000;">{</span></div>
<div class="t " style="left:43.60000000000002px;top:151.10px;font-size:11.75px;line-height:14px;height:14px;letter-spacing:-0.038px;"><span style="color:#0b6826;">location</span><span style="color:#000;"> = </span><span style="color:#0b6826;">location.Trim</span><span style="color:#000;">();</span></div>
<div class="t " style="left:31.899999999999977px;top:165.23px;font-size:11.75px;line-height:14px;height:14px;letter-spacing:-0.120px;"><span style="color:#000;">}</span></div>
<div class="t " style="left:20.19999999999999px;top:179.36px;font-size:11.75px;line-height:14px;height:14px;letter-spacing:-0.120px;"><span style="color:#000;">}</span></div>
<div class="t " style="left:20.19999999999999px;top:193.49px;font-size:11.75px;line-height:14px;height:14px;letter-spacing:0.069px;"><span style="color:#0b6826;">parameters.TempFiles</span><span style="color:#000;"> = </span><span style="color:#2010a6;">new</span><span style="color:#000;"> </span><span style="color:#0b6826;">TempFileCollection</span><span style="color:#000;">(</span><span style="color:#0b6826;">location</span><span style="color:#000;">);</span></div>
<div class="t " style="left:20.19999999999999px;top:207.62px;font-size:11.75px;line-height:14px;height:14px;letter-spacing:-0.005px;"><span style="color:#2010a6;">return new</span><span style="color:#000;"> </span><span style="color:#0b6826;">XmlSerializerCompilerParameters</span><span style="color:#000;">(</span><span style="color:#0b6826;">parameters</span><span style="color:#000;">, </span><span style="color:#0b6826;">string.IsNullOrEmpty</span><span style="color:#000;">(</span><span style="color:#0b6826;">location</span><span style="color:#000;">));</span></div>
<div class="t " style="left:8.5px;top:221.75px;font-size:11.75px;line-height:14px;height:14px;letter-spacing:-0.120px;"><span style="color:#000;">}</span></div>
</div>
<div class="a hdr" style="left:309px;top:353.2px;width:680.5px;height:17px"></div>
<div class="t " style="left:311.5px;top:354.60px;font-size:12.2px;line-height:16px;height:16px;letter-spacing:-0.490px;"><span style="color:#000;">Analyzer</span></div>
<svg class="ic" style="left:977px;top:357.8px" width="8" height="8" viewBox="0 0 8 8"><path d="M1 1L7 7M7 1L1 7" stroke="#5a5a5a" stroke-width="0.75" fill="none"/></svg>
<div class="a" style="left:309px;top:370.7px;width:680.5px;height:1px;background:#828995"></div>
<div class="a" style="left:309px;top:370.7px;width:1px;height:300.3px;background:#828995"></div>
<div class="a" style="left:310px;top:371.5px;width:679px;height:299.5px;overflow:hidden">
<div class="bx" style="left:6.5px;top:6.5px"><i class="h"></i></div>
<svg class="ic" style="left:21.0px;top:1.5px" width="16" height="16" viewBox="0 0 16 16" ><use href="#m-static-int"/></svg>
<div class="t " style="left:40.8px;top:1.80px;font-size:11.6px;line-height:16px;height:16px;letter-spacing:0.035px;"><span style="color:#8a8a8a;">System.Xml.Serialization.XmlSerializerCompilerParameters.Create(String) : XmlSerializerCompilerParameters</span></div>
<div class="bx" style="left:24.5px;top:23.5px"><i class="h"></i><i class="v"></i></div>
<svg class="ic" style="left:40.0px;top:18.5px" width="16" height="16" viewBox="0 0 16 16" ><use href="#dep"/></svg>
<div class="t " style="left:58.8px;top:18.80px;font-size:11.6px;line-height:16px;height:16px;letter-spacing:-0.120px;"><span style="color:#000;">Depends On</span></div>
<div class="bx" style="left:24.5px;top:40.5px"><i class="h"></i></div>
<svg class="ic" style="left:40.0px;top:35.5px" width="16" height="16" viewBox="0 0 16 16" ><use href="#dep"/></svg>
<div class="t " style="left:58.8px;top:35.80px;font-size:11.6px;line-height:16px;height:16px;letter-spacing:-0.120px;"><span style="color:#000;">Used By</span></div>
<div class="bx" style="left:42.5px;top:57.5px"><i class="h"></i></div>
<svg class="ic" style="left:57.0px;top:52.5px" width="16" height="16" viewBox="0 0 16 16" ><use href="#ctor-int"/></svg>
<div class="t " style="left:76.8px;top:52.80px;font-size:11.6px;line-height:16px;height:16px;letter-spacing:-0.051px;"><span style="color:#8a8a8a;">System.Xml.Serialization.TempAssembly..ctor(XmlMapping[], Type[], String, String, Evidence)</span></div>
<div class="bx" style="left:60.5px;top:74.5px"><i class="h"></i><i class="v"></i></div>
<svg class="ic" style="left:76.0px;top:69.5px" width="16" height="16" viewBox="0 0 16 16" ><use href="#dep"/></svg>
<div class="t " style="left:94.8px;top:69.80px;font-size:11.6px;line-height:16px;height:16px;letter-spacing:-0.120px;"><span style="color:#000;">Depends On</span></div>
<div class="bx" style="left:60.5px;top:91.5px"><i class="h"></i></div>
<svg class="ic" style="left:76.0px;top:86.5px" width="16" height="16" viewBox="0 0 16 16" ><use href="#dep"/></svg>
<div class="t " style="left:94.8px;top:86.80px;font-size:11.6px;line-height:16px;height:16px;letter-spacing:-0.120px;"><span style="color:#000;">Used By</span></div>
<div class="bx" style="left:78.5px;top:108.5px"><i class="h"></i><i class="v"></i></div>
<svg class="ic" style="left:93.0px;top:103.5px" width="16" height="16" viewBox="0 0 16 16" ><use href="#m-static"/></svg>
<div class="t " style="left:112.8px;top:103.80px;font-size:11.6px;line-height:16px;height:16px;letter-spacing:-0.054px;"><span style="color:#000;">System.Xml.Serialization.XmlSerializer.FromMappings(XmlMapping[], Evidence) : XmlSerializer[]</span></div>
<div class="bx" style="left:78.5px;top:125.5px"><i class="h"></i><i class="v"></i></div>
<svg class="ic" style="left:93.0px;top:120.5px" width="16" height="16" viewBox="0 0 16 16" ><use href="#m-static"/></svg>
<div class="t " style="left:112.8px;top:120.80px;font-size:11.6px;line-height:16px;height:16px;letter-spacing:-0.054px;"><span style="color:#000;">System.Xml.Serialization.XmlSerializer.FromMappings(XmlMapping[], Type) : XmlSerializer[]</span></div>
<div class="bx" style="left:78.5px;top:142.5px"><i class="h"></i></div>
<svg class="ic" style="left:93.0px;top:137.5px" width="16" height="16" viewBox="0 0 16 16" ><use href="#m-static-int"/></svg>
<div class="t " style="left:112.8px;top:137.80px;font-size:11.6px;line-height:16px;height:16px;letter-spacing:0.001px;"><span style="color:#8a8a8a;">System.Xml.Serialization.XmlSerializer.GenerateTempAssembly(XmlMapping, Type, String) : TempAssembly</span></div>
<div class="bx" style="left:96.5px;top:159.5px"><i class="h"></i><i class="v"></i></div>
<svg class="ic" style="left:112.0px;top:154.5px" width="16" height="16" viewBox="0 0 16 16" ><use href="#dep"/></svg>
<div class="t " style="left:130.8px;top:154.80px;font-size:11.6px;line-height:16px;height:16px;letter-spacing:-0.120px;"><span style="color:#000;">Depends On</span></div>
<div class="bx" style="left:96.5px;top:176.5px"><i class="h"></i></div>
<svg class="ic" style="left:112.0px;top:171.5px" width="16" height="16" viewBox="0 0 16 16" ><use href="#dep"/></svg>
<div class="t " style="left:130.8px;top:171.80px;font-size:11.6px;line-height:16px;height:16px;letter-spacing:-0.120px;"><span style="color:#000;">Used By</span></div>
<div class="bx" style="left:114.5px;top:193.5px"><i class="h"></i><i class="v"></i></div>
<svg class="ic" style="left:129.0px;top:188.5px" width="16" height="16" viewBox="0 0 16 16" ><use href="#ctor"/></svg>
<div class="t " style="left:148.8px;top:188.80px;font-size:11.6px;line-height:16px;height:16px;letter-spacing:-0.065px;"><span style="color:#000;">System.Xml.Serialization.XmlSerializer..ctor(Type, String)</span></div>
<div class="bx" style="left:114.5px;top:210.5px"><i class="h"></i><i class="v"></i></div>
<svg class="ic" style="left:129.0px;top:205.5px" width="16" height="16" viewBox="0 0 16 16" ><use href="#m-static-int"/></svg>
<div class="t " style="left:148.8px;top:205.80px;font-size:11.6px;line-height:16px;height:16px;letter-spacing:0.026px;"><span style="color:#8a8a8a;">System.Xml.Serialization.XmlSerializer.GenerateTempAssembly(XmlMapping) : TempAssembly</span></div>
<div class="bx" style="left:114.5px;top:227.5px"><i class="h"></i><i class="v"></i></div>
<svg class="ic" style="left:129.0px;top:222.5px" width="16" height="16" viewBox="0 0 16 16" ><use href="#m-plain"/></svg>
<div class="a" style="left:146.8px;top:222.5px;width:468.2px;height:17px;background:#3399ff"></div>
<div class="t " style="left:148.8px;top:222.80px;font-size:11.6px;line-height:16px;height:16px;letter-spacing:-0.084px;"><span style="color:#fff;">System.Xml.Serialization.XmlSerializerFactory.CreateSerializer(Type, String) : XmlSerializer</span></div>
<div class="bx" style="left:78.5px;top:244.5px"><i class="h"></i><i class="v"></i></div>
<svg class="ic" style="left:93.0px;top:239.5px" width="16" height="16" viewBox="0 0 16 16" ><use href="#m-static-int"/></svg>
<div class="t " style="left:112.8px;top:239.80px;font-size:11.6px;line-height:16px;height:16px;letter-spacing:-0.046px;"><span style="color:#8a8a8a;">System.Xml.Serialization.XmlSerializer.GenerateTempAssembly(XmlMapping, Type, String, String, Evidence) : TempAssembly</span></div>
<div class="bx" style="left:78.5px;top:261.5px"><i class="h"></i><i class="v"></i></div>
<svg class="ic" style="left:93.0px;top:256.5px" width="16" height="16" viewBox="0 0 16 16" ><use href="#m-static-private"/></svg>
<div class="t " style="left:112.8px;top:256.80px;font-size:11.6px;line-height:16px;height:16px;letter-spacing:-0.058px;"><span style="color:#8a8a8a;">System.Xml.Serialization.XmlSerializer.GetSerializersFromCache(XmlMapping[], Type) : XmlSerializer[]</span></div>
</div>
<svg class="ic" style="left:724px;top:612px" width="250" height="38" viewBox="0 0 250 38">
<defs><mask id="wm"><rect width="60" height="40" fill="#fff"/><ellipse cx="26.800" cy="23.400" rx="11.800" ry="10.400" fill="#000"/></mask></defs>
<g fill="none" stroke="rgba(0,0,0,.40)" stroke-width="2.500" stroke-linecap="round" stroke-linejoin="round">
<g transform="translate(46,8) scale(1,.9)"><path d="M10 2L2 12M15 2L24 12M12 13L6 23L20 22M17 17L22 25"/></g>
<g transform="translate(75,8) scale(1.040,.9)"><path d="M13 1L4 11M13 1L23 11M7 12L1 25M7 16L12 25M19 12L13 25M19 16L25 25"/></g>
<g transform="translate(106,8) scale(.94,.9)"><path d="M6 2H20V9H6zM1 13H25M9 13L8 18H20L19 24L15 25"/></g>
<g transform="translate(163.500,7.500) scale(.96,.9)"><path d="M1 8H25M13 1V26M13 9L2 22M13 9L24 22"/></g>
<g transform="translate(195.500,8) scale(.96,.9)"><path d="M4 3H21L13 10V25L9 23M1 14H25"/></g>
<g transform="translate(221.500,8) scale(.86,.9)"><path d="M1 4H10L6 10V25L3 23M0 15L11 14M18 2V25L15 23M14 9L11 18M22 9L26 18"/></g>
</g>
<circle cx="145" cy="19" r="1.300" fill="rgba(0,0,0,.40)"/>
<g mask="url(#wm)"><path d="M14.800 5.600A14 9.800 0 1 1 10.500 24.700L4.500 28.500L7 22.800A14 9.800 0 0 1 14.800 5.600Z" fill="rgba(0,0,0,.42)"/>
<ellipse cx="10" cy="12" rx="1.700" ry="1.500" fill="#fff"/><ellipse cx="19" cy="12" rx="1.700" ry="1.500" fill="#fff"/></g>
<path d="M26.800 14.200A10.600 9.200 0 1 0 30.500 32L35.500 34.500L33.500 30.500A10.600 9.200 0 0 0 26.800 14.200Z" fill="rgba(0,0,0,.42)"/>
<ellipse cx="23" cy="21" rx="1.400" ry="1.300" fill="#fff"/><ellipse cx="30.500" cy="21" rx="1.400" ry="1.300" fill="#fff"/>
</svg>

<div class="a" style="left:153px;top:61.6px;width:190px;height:181.4px;background:#fff;box-shadow:-0.7px -0.7px 0 0 #b4b4b4, 2px 2px 2.5px rgba(0,0,0,.55), 0 0 2px rgba(0,0,0,.2)">
<svg class="ic" style="left:4px;top:6.199999999999996px" width="16" height="16" viewBox="0 0 16 16" ><use href="#mn-back"/></svg><div class="t" style="left:25.5px;top:5.899999999999995px;font-size:11.9px;line-height:16px;font-weight:bold;color:#000;letter-spacing:-0.33px"><u>B</u>ack</div><div class="t" style="right:23.3px;top:5.899999999999995px;font-size:11.9px;line-height:16px;font-weight:bold;color:#000;letter-spacing:-0.34px">Alt+Left</div>
<svg class="ic" style="left:4px;top:27.4px" width="16" height="16" viewBox="0 0 16 16" ><use href="#mn-fwd"/></svg><div class="t" style="left:25.5px;top:27.099999999999998px;font-size:11.9px;line-height:16px;font-weight:bold;color:#000;letter-spacing:-0.33px"><u>F</u>orward</div><div class="t" style="right:23.3px;top:27.099999999999998px;font-size:11.9px;line-height:16px;font-weight:bold;color:#000;letter-spacing:-0.34px">Alt+Right</div>
<div class="a msep" style="top:49.9px"></div>
<svg class="ic" style="left:4px;top:57.69999999999999px" width="16" height="16" viewBox="0 0 16 16" ><use href="#mn-star"/></svg><div class="t" style="left:25.5px;top:57.39999999999999px;font-size:11.9px;line-height:16px;font-weight:bold;color:#000;letter-spacing:-0.33px">Toggle Bookmar<u>k</u></div><div class="t" style="right:23.3px;top:57.39999999999999px;font-size:11.9px;line-height:16px;font-weight:bold;color:#000;letter-spacing:-0.34px">Ctrl+K</div>
<div class="a msep" style="top:79.9px"></div>
<svg class="ic" style="left:4px;top:87.70000000000002px" width="16" height="16" viewBox="0 0 16 16" ><use href="#mn-copy"/></svg><div class="t" style="left:25.5px;top:87.40000000000002px;font-size:11.9px;line-height:16px;font-weight:bold;color:#000;letter-spacing:-0.33px"><u>C</u>opy</div><div class="t" style="right:23.3px;top:87.40000000000002px;font-size:11.9px;line-height:16px;font-weight:bold;color:#000;letter-spacing:-0.34px">Ctrl+C</div>
<div class="a msep" style="top:110.4px"></div>
<svg class="ic" style="left:4px;top:118.4px" width="16" height="16" viewBox="0 0 16 16" ><use href="#mn-dis"/></svg><div class="t" style="left:25.5px;top:118.10000000000001px;font-size:11.9px;line-height:16px;font-weight:bold;color:#000;letter-spacing:-0.33px"><u>D</u>isassemble</div>
<div class="a" style="left:2px;top:136.4px;width:186px;height:22px;background:#3399ff"></div><div class="t" style="left:25.5px;top:139.7px;font-size:11.9px;line-height:16px;font-weight:bold;color:#fff;letter-spacing:-0.33px"><u>A</u>nalyze</div><div class="t" style="right:23.3px;top:139.7px;font-size:11.9px;line-height:16px;font-weight:bold;color:#fff;letter-spacing:-0.34px">Ctrl+R</div>
<div class="t" style="left:25.5px;top:161.4px;font-size:11.9px;line-height:16px;font-weight:bold;color:#a8a8a8;letter-spacing:-0.33px">Search <u>M</u>SDN</div><div class="t" style="right:23.3px;top:161.4px;font-size:11.9px;line-height:16px;font-weight:bold;color:#a8a8a8;letter-spacing:-0.34px">Ctrl+M</div>
</div>
</body></html>
